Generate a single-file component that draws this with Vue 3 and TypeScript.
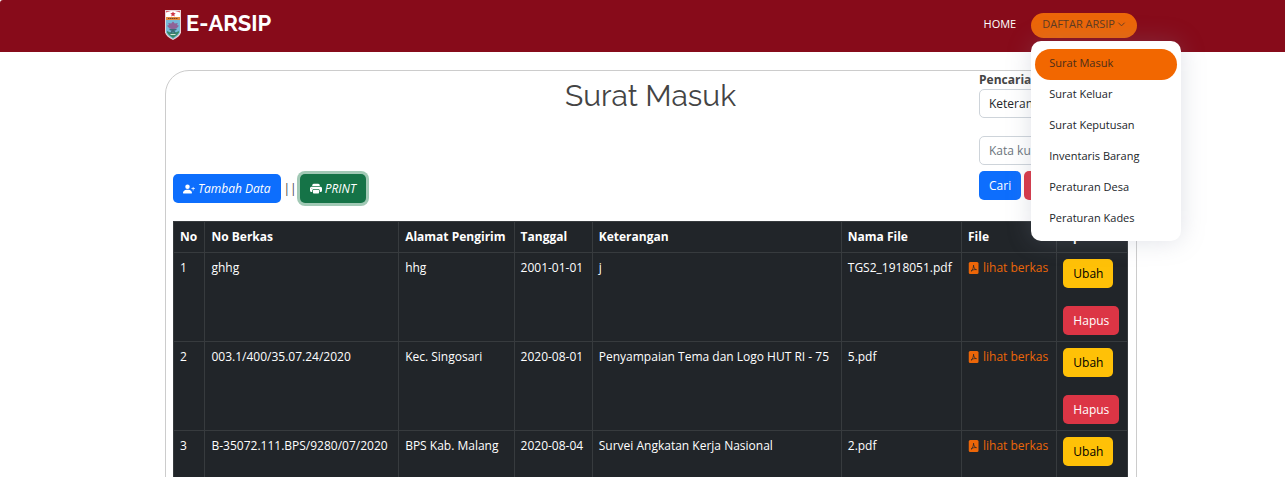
<script setup lang="ts">
import { ref } from 'vue'

interface Berkas {
  no: number
  noBerkas: string
  alamat: string
  tanggal: string
  keterangan: string
  namaFile: string
}

const menu: string[] = [
  'Surat Masuk',
  'Surat Keluar',
  'Surat Keputusan',
  'Inventaris Barang',
  'Peraturan Desa',
  'Peraturan Kades',
]
const active = ref('Surat Masuk')
const open = ref(true)
const field = ref('Keterangan')
const keyword = ref('')

const rows: Berkas[] = [
  { no: 1, noBerkas: 'ghhg', alamat: 'hhg', tanggal: '2001-01-01', keterangan: 'j', namaFile: 'TGS2_1918051.pdf' },
  { no: 2, noBerkas: '003.1/400/35.07.24/2020', alamat: 'Kec. Singosari', tanggal: '2020-08-01', keterangan: 'Penyampaian Tema dan Logo HUT RI - 75', namaFile: '5.pdf' },
  { no: 3, noBerkas: 'B-35072.111.BPS/9280/07/2020', alamat: 'BPS Kab. Malang', tanggal: '2020-08-04', keterangan: 'Survei Angkatan Kerja Nasional', namaFile: '2.pdf' },
]
</script>

<template>
  <div class="page">
    <header class="topbar">
      <a class="brand" href="#">
        <svg class="logo" viewBox="0 0 16 30" aria-hidden="true">
          <path d="M0 0h16v22.500q-1 4-8 7.500q-7-3.500-8-7.500z" fill="#e9d3d5" />
          <path d="M1 7h14v15q-1 3.500-7 7q-6-3.500-7-7z" fill="#75b9d8" />
          <path d="M1 1h14v6H1z" fill="#fff" />
          <path d="M1 1h5l-5 1.500zM15 1h-5l5 1.500z" fill="#d9606a" />
          <path d="M8 1.500l.8 1.600 1.900.2-1.400 1.300.4 1.900L8 5.600l-1.700.9.4-1.900-1.400-1.300 1.900-.2z" fill="#cf3543" />
          <path d="M1 7h14v3H1z" fill="#e58b3a" />
          <path d="M3 8.500h10" stroke="#774329" stroke-width="1" stroke-dasharray="1.500 .5" />
          <path d="M2 21q2.500 1.500 6 1.500t6-1.500v1.500q-1.500 3-6 5.500q-4.500-2.500-6-5.500z" fill="#398a68" />
          <path d="M8 11.500l1.800 2 3-.5-.8 2 2 .7-2.500 2.800-3.500.8-3.500-.8L2 15.700l2-.7-.8-2 3 .5z" fill="#8f6397" />
          <path d="M4 19h8l-1.500 1.500H9.500l1.500 3H9l-1-2-1 2H5l1.500-3H5.500z" fill="#3c6d79" />
          <path d="M5.500 24.500h5" stroke="#d3e2d6" />
        </svg>
        <span>E-ARSIP</span>
      </a>
      <nav class="nav">
        <a class="home" href="#">HOME</a>
        <div class="dropdown">
          <button class="toggle" type="button" :aria-expanded="open" @click="open = !open">
            DAFTAR ARSIP
            <svg class="chevron" viewBox="0 0 10 10" aria-hidden="true">
              <path d="M1.500 3l3.500 3.500L8.500 3" fill="none" stroke="currentColor" />
            </svg>
          </button>
          <ul v-if="open" class="menu">
            <li v-for="item in menu" :key="item">
              <a href="#" :class="{ active: item === active }" @click.prevent="active = item">{{ item }}</a>
            </li>
          </ul>
        </div>
      </nav>
    </header>

    <main class="card">
      <div class="head">
        <div class="tools">
          <button class="btn blue slanted" type="button">
            <svg class="icon" viewBox="0 0 16 16" fill="currentColor" aria-hidden="true">
              <path d="M1 14s-1 0-1-1 1-4 6-4 6 3 6 4-1 1-1 1zm5-6a3 3 0 1 0 0-6 3 3 0 0 0 0 6" />
              <path d="M13.500 5a.5.5 0 0 1 .5.5V7h1.500a.5.5 0 0 1 0 1H14v1.500a.5.5 0 0 1-1 0V8h-1.500a.5.5 0 0 1 0-1H13V5.500a.5.5 0 0 1 .5-.5" />
            </svg>
            Tambah Data
          </button>
          <span>||</span>
          <button class="btn green slanted" type="button">
            <svg class="icon" viewBox="0 0 16 16" fill="currentColor" aria-hidden="true">
              <path d="M5 1a2 2 0 0 0-2 2v1h10V3a2 2 0 0 0-2-2zm6 8H5a1 1 0 0 0-1 1v3a1 1 0 0 0 1 1h6a1 1 0 0 0 1-1v-3a1 1 0 0 0-1-1" />
              <path d="M0 7a2 2 0 0 1 2-2h12a2 2 0 0 1 2 2v3a2 2 0 0 1-2 2h-1v-2a2 2 0 0 0-2-2H5a2 2 0 0 0-2 2v2H2a2 2 0 0 1-2-2zm2.500 1a.5.5 0 1 0 0-1 .5.5 0 0 0 0 1" />
            </svg>
            PRINT
          </button>
        </div>
        <h1>Surat Masuk</h1>
        <form class="search" @submit.prevent>
          <label for="field">Pencarian</label>
          <select id="field" v-model="field">
            <option>Keterangan</option>
            <option>No Berkas</option>
          </select>
          <input v-model="keyword" type="text" placeholder="Kata kunci" aria-label="Kata kunci" />
          <div class="actions">
            <button class="btn blue" type="submit">Cari</button>
            <button class="btn red" type="reset">Reset</button>
          </div>
        </form>
      </div>

      <table>
        <colgroup>
          <col class="c-no" />
          <col class="c-berkas" />
          <col class="c-alamat" />
          <col class="c-tanggal" />
          <col class="c-ket" />
          <col class="c-nama" />
          <col class="c-file" />
          <col class="c-opsi" />
        </colgroup>
        <thead>
          <tr>
            <th>No</th>
            <th>No Berkas</th>
            <th>Alamat Pengirim</th>
            <th>Tanggal</th>
            <th>Keterangan</th>
            <th>Nama File</th>
            <th>File</th>
            <th>Opsi</th>
          </tr>
        </thead>
        <tbody>
          <tr v-for="row in rows" :key="row.no">
            <td>{{ row.no }}</td>
            <td>{{ row.noBerkas }}</td>
            <td>{{ row.alamat }}</td>
            <td>{{ row.tanggal }}</td>
            <td>{{ row.keterangan }}</td>
            <td>{{ row.namaFile }}</td>
            <td>
              <a class="file" href="#">
                <svg class="icon" viewBox="0 0 16 16" aria-hidden="true">
                  <rect x="1" width="13" height="16" rx="2" fill="currentColor" />
                  <path d="M4 12.300C6 11 7.500 7.500 7.400 4.200C7.500 7.500 9 10 11.300 10.200C8.500 9.700 6 10.500 4 12.300z" fill="none" stroke="#212529" stroke-linejoin="round" />
                </svg>
                lihat berkas
              </a>
            </td>
            <td>
              <div class="row-actions">
                <button class="btn yellow" type="button">Ubah</button>
                <button class="btn red" type="button">Hapus</button>
              </div>
            </td>
          </tr>
        </tbody>
      </table>
    </main>
  </div>
</template>

<style>
html {
  overflow: hidden;
}
body {
  margin: 0;
  background: #fff;
}
</style>

<style scoped>
.page {
  font: 12px/18px 'Open Sans', 'Noto Sans', sans-serif;
  color: #444;
}
.page * {
  box-sizing: border-box;
}
a {
  text-decoration: none;
}
button,
input,
select {
  font: inherit;
}
.topbar {
  display: flex;
  align-items: center;
  justify-content: space-between;
  height: 52px;
  padding: 0 148px 2px 165px;
  background: #870b1a;
  border-top-left-radius: 3px;
}
.brand {
  display: flex;
  align-items: center;
  gap: 5px;
  color: #fff;
  font: 700 22px/28px Raleway, Lato, sans-serif;
}
.brand span {
  padding-bottom: 4px;
}
.logo {
  width: 16px;
  height: 30px;
}
.nav {
  display: flex;
  align-items: center;
  gap: 15px;
  font-size: 11px;
}
.home {
  padding-bottom: 2px;
  color: #fff;
}
.dropdown {
  position: relative;
}
.toggle {
  display: flex;
  align-items: center;
  gap: 2px;
  height: 25px;
  padding: 0 11px 2px;
  border: 0;
  border-radius: 13px;
  background: #ec6608;
  color: #5c3a22;
}
.chevron {
  width: 9px;
  height: 9px;
}
.menu {
  position: absolute;
  z-index: 5;
  top: 28px;
  left: 0;
  width: 150px;
  margin: 0;
  padding: 8px 4px 6px;
  list-style: none;
  background: #fff;
  border-radius: 10px;
  box-shadow: 0 0 24px rgba(127, 137, 161, 0.25);
}
.menu a {
  display: block;
  padding: 5px 14px 8px;
  border-radius: 16px;
  color: #212529;
}
.menu a.active {
  background: #f26700;
  color: #4a2c1a;
}
.card {
  margin: 18px 148px 0 165px;
  padding: 0 8px 8px 7px;
  border: 1px solid #ccc;
  border-radius: 24px;
}
.head {
  display: grid;
  grid-template-columns: 1fr auto 1fr;
  margin-bottom: 18px;
}
.tools {
  display: flex;
  align-items: center;
  align-self: end;
  gap: 3px;
}
h1 {
  margin: 6px 0 0;
  font: 400 30px/38px Raleway, Lato, sans-serif;
}
.search {
  display: flex;
  flex-direction: column;
  justify-self: end;
  width: 149px;
  padding-bottom: 3px;
}
.search label {
  font-weight: 700;
}
.search select,
.search input {
  width: 100%;
  height: 29px;
  padding: 0 9px;
  border: 1px solid #ced4da;
  border-radius: 5px;
  background: #fff;
  color: #212529;
  appearance: none;
}
.search input {
  margin: 18px 0 6px;
}
.search input::placeholder {
  color: #6c757d;
}
.actions {
  display: flex;
  gap: 3px;
}
.btn {
  display: flex;
  align-items: center;
  gap: 3px;
  height: 29px;
  padding: 0 10px;
  border: 0;
  border-radius: 5px;
  color: #fff;
  white-space: nowrap;
}
.slanted {
  font-style: italic;
}
.blue {
  background: #0d6efd;
}
.green {
  background: #157347;
  box-shadow: 0 0 0 3px #a1c9b5;
}
.red {
  background: #dc3545;
}
.yellow {
  background: #ffc107;
  color: #000;
}
.icon {
  flex: none;
  width: 12px;
  height: 12px;
}
table {
  width: 100%;
  table-layout: fixed;
  border-collapse: collapse;
  background: #212529;
  color: #fff;
}
.c-no { width: 3.3%; }
.c-berkas { width: 20.3%; }
.c-alamat { width: 12.1%; }
.c-tanggal { width: 8.2%; }
.c-ket { width: 26.1%; }
.c-nama { width: 12.6%; }
.c-file { width: 10%; }
.c-opsi { width: 7.4%; }
th,
td {
  padding: 6px;
  border: 1px solid #373b3e;
  text-align: left;
  vertical-align: top;
  white-space: nowrap;
}
.file {
  display: flex;
  align-items: center;
  gap: 3px;
  color: #ec6608;
}
.row-actions {
  display: flex;
  flex-direction: column;
  align-items: flex-start;
  gap: 18px;
}
</style>
